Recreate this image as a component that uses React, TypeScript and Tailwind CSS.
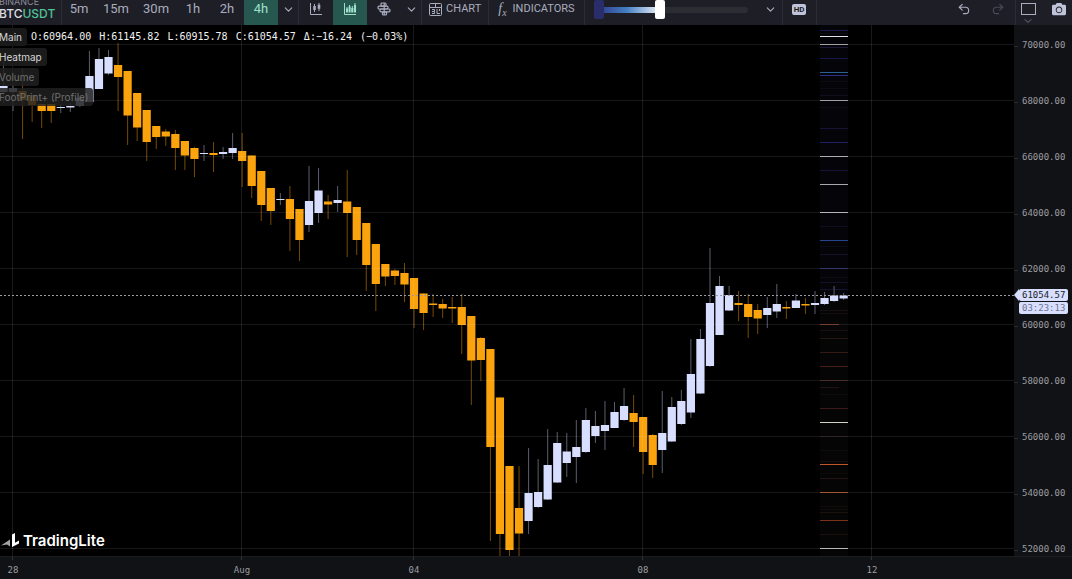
import { useState } from 'react'
import type { ReactNode } from 'react'
import { ChevronDown, Redo2, Undo2 } from 'lucide-react'
import { FaCamera } from 'react-icons/fa'

type Candle = [up: 0 | 1, high: number, top: number, bottom: number, low: number]

const FIRST_X = 3
const STEP = 9.547
const HEADER = 25

// up, high, body top, body bottom, low
const candles: Candle[] = [
  [1, 62, 86, 92, 103], [1, 84, 88, 92, 111], [0, 68, 91, 100, 139], [0, 95, 95, 105, 122],
  [0, 104, 104, 111, 128], [0, 104, 104, 111, 123], [1, 104, 107, 108, 113], [1, 103, 106, 107.5, 112],
  [1, 96, 98, 106, 107], [1, 51, 76, 102, 102], [1, 48, 59, 89, 89], [1, 50, 57, 73.5, 75],
  [0, 43, 65, 77, 111], [0, 71, 71, 115.5, 145], [0, 93, 93, 127.5, 141], [0, 110, 110, 142, 161],
  [0, 126, 126, 137, 149], [0, 129, 131.5, 136.5, 146], [0, 130, 134, 148, 170], [0, 141, 141, 155.5, 170],
  [0, 147, 148, 159, 177], [1, 145, 153, 154, 161], [0, 142, 153, 155, 172], [1, 147, 152, 154, 159],
  [1, 133, 148, 153, 159], [0, 133, 151, 161, 187], [0, 155, 155.5, 186, 198], [0, 171, 171, 205, 221],
  [0, 188, 188, 211, 225], [1, 193, 199, 200, 205], [0, 186, 199, 219, 251], [0, 209, 209, 240, 261],
  [1, 166, 201, 225, 232], [1, 168, 190.5, 213, 223], [0, 195, 201.5, 204.5, 219], [1, 186, 200, 203, 212],
  [0, 170, 201.5, 213, 257], [0, 207, 207, 240, 255], [0, 223, 223, 265, 291], [0, 244, 244, 284, 311],
  [0, 264, 264, 276.5, 286], [0, 269, 270.5, 276, 285], [0, 263, 273, 284.5, 302], [0, 278, 278, 309, 328],
  [0, 293, 293.5, 313, 330], [0, 294, 303.5, 305, 317], [0, 299, 304, 308.5, 318], [0, 297, 307, 308.5, 323],
  [0, 294, 307, 325, 354], [0, 316, 316, 360.5, 405], [0, 337, 338, 360, 381], [0, 349, 349, 447, 541],
  [0, 397, 397.5, 534, 560], [0, 466, 466, 550, 560], [0, 466, 508, 533.5, 560], [1, 448, 493, 521, 534],
  [1, 459, 492, 507, 508], [1, 429, 465, 499.5, 500], [1, 432, 443, 482.5, 483], [1, 433, 451.5, 463, 477],
  [1, 420, 447, 457, 483], [1, 408, 420, 452, 453], [1, 411, 426, 436, 443], [1, 401, 425, 431, 450],
  [1, 402, 412, 428, 428], [1, 388, 406, 420, 421], [0, 395, 413, 422, 447], [0, 417, 417, 452, 474],
  [0, 434, 435, 465, 478], [1, 391, 433, 450, 473], [1, 397, 407, 441.5, 442], [1, 390, 401, 424, 425],
  [1, 339, 374, 412.5, 418], [1, 329, 339, 393.5, 394], [1, 248, 303, 366, 367], [1, 276, 286, 335, 335],
  [1, 286, 295, 310.5, 311], [0, 291, 303, 305, 321], [0, 294, 304, 317, 338], [0, 304, 310, 318.5, 334],
  [1, 297, 308, 315, 328], [1, 284, 304, 311.5, 318], [0, 301, 307, 308.5, 319], [1, 294, 300.5, 308, 308],
  [0, 298, 304, 305.5, 314], [1, 291, 303, 305, 314], [1, 292, 298, 304, 305], [1, 286, 295.5, 301, 302],
  [1, 293, 295.5, 298.5, 300],
]

const heat: [y: number, color: string, width?: number][] = [
  [30, '#1b1850'], [33, '#0d0c16'], [36, '#e4e4e6'], [44, '#9a9a9f'], [47, '#1a1838'], [58, '#17164a'],
  [72, '#28608f'], [75, '#2b3183'], [81, '#0b0b10'], [88, '#0b0b10'], [95, '#100f1e'], [100, '#97979a'],
  [107, '#0b0b10'], [128, '#151336'], [142, '#1d2060'], [156, '#a7a7a9'], [170, '#161338'], [184, '#a9a9ab'],
  [212, '#adadaf'], [226, '#0f0e1e'], [240, '#25458f'], [246, '#0d0c16'], [254, '#14122a'], [268, '#23255f'],
  [277, '#0d0c16'], [282, '#121126'], [289, '#14122c'], [310, '#160e10'], [313, '#130d0d'], [324, '#6b2c1a', 19],
  [330, '#180f0e'], [338, '#251713'], [352, '#331b14'], [366, '#471f17'], [380, '#371a15'], [387, '#211311', 19],
  [394, '#0f0b0b'], [408, '#3f1819'], [422, '#cfd2c6'], [436, '#1a1112'], [450, '#0d0b0b'], [461, '#170e0f'],
  [464, '#bf5829'], [473, '#0f0b0b'], [478, '#241314'], [492, '#9b4322'], [506, '#0f0c0b'], [509, '#120d0b'],
  [512, '#1b120d'], [520, '#7c321a'], [534, '#19100d'], [548, '#b4b4b4'],
]

const prices = [70000, 68000, 66000, 64000, 62000, 60000, 58000, 56000, 54000, 52000]
const days = [
  { x: 13, label: '28' },
  { x: 242, label: 'Aug' },
  { x: 414, label: '04' },
  { x: 643, label: '08' },
  { x: 872, label: '12' },
]
const frames = ['5m', '15m', '30m', '1h', '2h', '4h']
const quote = ['O:60964.00', 'H:61145.82', 'L:60915.78', 'C:61054.57', 'Δ:−16.24', '(−0.03%)']
const layers = [
  { name: 'Heatmap', on: true },
  { name: 'Volume', on: false },
  { name: 'FootPrint+ (Profile)', on: false },
]

const mono = "font-['DejaVu_Sans_Mono',monospace]"
const thumb =
  'pointer-events-none absolute inset-0 h-full w-full appearance-none bg-transparent [&::-webkit-slider-thumb]:pointer-events-auto [&::-webkit-slider-thumb]:h-[19px] [&::-webkit-slider-thumb]:w-[10px] [&::-webkit-slider-thumb]:appearance-none [&::-webkit-slider-thumb]:rounded-[2px]'

function CandlesIcon() {
  return (
    <svg width="14" height="14" viewBox="0 0 14 14" fill="none" stroke="currentColor">
      <path d="M1.5 1v11.5H13" />
      <path d="M5.5 2v8M10 1v8" />
      <path d="M5.5 4v4M10 2.8v4" strokeWidth="2.6" />
    </svg>
  )
}

function FilledCandlesIcon() {
  return (
    <svg width="14" height="14" viewBox="0 0 14 14" fill="none" stroke="currentColor">
      <path d="M1.5 1v11.5H13" />
      <path d="M4 5v5M6.5 3v6M9.3 4v6M12 1v8" />
      <path d="M4 6.5v4M6.6 4.5v6M9.3 6v4.5M12 3v7.5" strokeWidth="2.1" />
    </svg>
  )
}

function FootprintIcon() {
  return (
    <svg width="14" height="14" viewBox="0 0 14 14" fill="none" stroke="currentColor" strokeWidth="1.2">
      <rect x="4" y="1" width="5" height="3.2" rx="1" />
      <rect x="1" y="4.2" width="10" height="2.8" rx="1" />
      <rect x="3" y="7" width="10" height="2.8" rx="1" />
      <rect x="5.5" y="9.8" width="4" height="3.2" rx="1" />
      <path d="M7.2 1v12" />
    </svg>
  )
}

function ChartIcon() {
  return (
    <svg width="13" height="13" viewBox="0 0 13 13" fill="none" stroke="currentColor">
      <rect x="0.5" y="0.5" width="12" height="12" rx="1" />
      <path d="M1 4.5h11M6.5 1v3.5M3 6.5h2.5v2H3M5.5 8.5v2H3M8 6v4.5h3M10.5 6v2" />
    </svg>
  )
}

function Logo() {
  return (
    <svg width="20" height="16" viewBox="0 0 20 16">
      <path d="M1 12.5 10 6.5v7l-3-2Z" fill="#a5a5a5" />
      <path d="M12 1.5 15 0v9.8l4-2.4v3L12 14Z" fill="#fff" />
    </svg>
  )
}

function Tool({ label, active, children }: { label: string; active?: boolean; children: ReactNode }) {
  return (
    <button
      aria-label={label}
      className={`flex w-[34px] items-center justify-center ${active ? 'bg-[#26584f] text-[#9fe0cb]' : 'hover:text-white'}`}
    >
      {children}
    </button>
  )
}

function More({ label }: { label: string }) {
  return (
    <button aria-label={label} className="flex w-5 items-center justify-center">
      <ChevronDown size={13} strokeWidth={2} />
    </button>
  )
}

function Toolbar() {
  const [frame, setFrame] = useState('4h')
  const [low, setLow] = useState(0)
  const [high, setHigh] = useState(43)

  return (
    <header className="-mt-[7px] flex h-8 shrink-0 bg-[#1e1e27] font-['Roboto',sans-serif] text-[#a9adbd]">
      <div className="flex w-[62px] shrink-0 flex-col justify-center border-r border-[#2c2c37] font-['Inter',sans-serif]">
        <span className="-ml-px text-[9px] leading-[10px] text-[#8b8d99]">BINANCE</span>
        <span className="-ml-px text-[12px] leading-[14px] font-medium text-[#dcdde3]">
          BTC<span className="text-[#4fc397]">USDT</span>
        </span>
      </div>

      {/* Timeframes */}
      <div className="flex border-r border-[#2c2c37]">
        {frames.map((f) => (
          <button
            key={f}
            onClick={() => setFrame(f)}
            className={`min-w-[34px] px-[7px] text-[13px] ${f === frame ? 'bg-[#26584f] text-[#9fe0cb]' : 'hover:text-white'}`}
          >
            {f}
          </button>
        ))}
        <More label="More timeframes" />
      </div>

      {/* Chart type */}
      <div className="flex border-r border-[#2c2c37]">
        <Tool label="Candles"><CandlesIcon /></Tool>
        <Tool label="Filled candles" active><FilledCandlesIcon /></Tool>
        <Tool label="Footprint"><FootprintIcon /></Tool>
        <More label="More chart types" />
      </div>

      <button className="flex items-center gap-1 border-r border-[#2c2c37] px-[7px] text-[11px] hover:text-white">
        <ChartIcon />
        CHART
      </button>
      <button className="flex items-center gap-[6px] border-r border-[#2c2c37] px-[9px] text-[11px] hover:text-white">
        <span className="font-['Liberation_Serif',serif] text-[14px] leading-none italic">
          f<sub className="text-[10px]">x</sub>
        </span>
        INDICATORS
      </button>

      {/* Heatmap range */}
      <div className="flex items-center border-r border-[#2c2c37] pl-[9px]">
        <div className="relative h-[19px] w-[154px]">
          <div className="absolute inset-x-0 top-[7px] h-[6px] rounded-full bg-[#2c2d32]" />
          <div
            className="absolute top-[7px] h-[6px] bg-linear-to-r from-[#2b3283] via-[#4580c4] to-[#f1f4f8]"
            style={{ left: `${low}%`, width: `${high - low}%` }}
          />
          <input
            type="range"
            aria-label="Heatmap minimum"
            value={low}
            onChange={(e) => setLow(Number(e.target.value))}
            className={`${thumb} [&::-webkit-slider-thumb]:bg-[#292d69]`}
          />
          <input
            type="range"
            aria-label="Heatmap maximum"
            value={high}
            onChange={(e) => setHigh(Number(e.target.value))}
            className={`${thumb} [&::-webkit-slider-thumb]:bg-white`}
          />
        </div>
        <button aria-label="Heatmap options" className="flex w-[34px] items-center justify-center pl-3">
          <ChevronDown size={13} strokeWidth={2} />
        </button>
      </div>

      <button aria-label="HD" className="flex w-[34px] items-center justify-center border-r border-[#2c2c37]">
        <span className="rounded-[2px] bg-[#c0c4da] px-[2px] text-[8px] leading-[11px] font-bold text-[#1e1e27]">HD</span>
      </button>

      <div className="ml-auto flex">
        <Tool label="Undo"><Undo2 size={14} /></Tool>
        <span className="flex text-[#4a4b57]">
          <Tool label="Redo"><Redo2 size={14} /></Tool>
        </span>
      </div>
      <div className="flex w-[57px] shrink-0 items-center justify-between border-l border-[#2c2c37] pr-[6px] pl-[5px]">
        <button aria-label="Layout" className="relative h-3 w-[15px] border border-[#a9adbd]">
          <ChevronDown size={12} className="absolute top-[11px] left-0 text-[#6d6f7c]" />
        </button>
        <button aria-label="Snapshot" className="text-[#c0c4da]">
          <FaCamera size={14} />
        </button>
      </div>
    </header>
  )
}

function Plot() {
  return (
    <svg className="absolute inset-0 h-full w-full" shapeRendering="crispEdges">
      <g transform={`translate(0 ${-HEADER})`}>
        <rect x="820" y="25" width="28" height="274" fill="#050509" />
        <rect x="820" y="299" width="28" height="262" fill="#060505" />
        {heat.map(([y, color, width]) => (
          <rect key={y} x="820" y={y} width={width ?? 28} height="1" fill={color} />
        ))}

        <g shapeRendering="auto">
          {candles.map(([up, hi, top, bottom, lo], i) => {
            const x = FIRST_X + i * STEP
            return (
              <g key={i}>
                <rect x={x} y={hi} width="1" height={lo - hi} fill={up ? '#5b5d6e' : '#754a06'} />
                <rect x={x - 3.6} y={top} width="8.2" height={bottom - top} fill={up ? '#d8deff' : '#faa30c'} />
              </g>
            )
          })}
        </g>

        {prices.map((p, i) => (
          <rect key={p} x="0" y={44 + i * 56} width="100%" height="1" fill="#fff" fillOpacity="0.09" />
        ))}
        {days.map((d) => (
          <rect key={d.x} x={d.x - 1} y="25" width="1" height="100%" fill="#fff" fillOpacity="0.1" />
        ))}
        <line x1="0" x2="100%" y1="295.5" y2="295.5" stroke="#9a9ba3" strokeDasharray="2 2" />
      </g>
    </svg>
  )
}

function PriceAxis() {
  return (
    <aside className={`relative w-[58px] shrink-0 overflow-hidden bg-[#111216] text-[9px] text-[#9c9da1] ${mono}`}>
      <ul className="-mt-[7px]">
        {prices.map((p) => (
          <li key={p} className="flex h-14 items-center gap-1">
            <span className="h-px w-1 bg-[#2a2b2f]" />
            {p.toFixed(2)}
          </li>
        ))}
      </ul>

      {/* Last price */}
      <div className="absolute top-[264px] left-0 flex">
        <svg width="5" height="12" viewBox="0 0 5 12">
          <path d="M5 0v12L0 6Z" fill="#d8deff" />
        </svg>
        <div className="flex flex-col gap-px text-center leading-3">
          <span className="rounded-[2px] bg-[#d8deff] px-[3px] text-[#1c1d24]">61054.57</span>
          <span className="rounded-[2px] bg-[#d8deff] px-[3px] text-[#70748c]">03:23:13</span>
        </div>
      </div>
    </aside>
  )
}

function Legend() {
  return (
    <div className="absolute top-[3px] left-0 flex flex-col items-start gap-[2px] font-['Inter',sans-serif] text-[10px] leading-[18px]">
      <div className="flex items-center gap-1">
        <button className="-ml-1 rounded-[3px] bg-[#191919] pr-[5px] pl-[3px] text-[#d6d6d6]">Main</button>
        <div className={`flex gap-2 text-[#f2f2f2] ${mono}`}>
          {quote.map((q) => (
            <span key={q}>{q}</span>
          ))}
        </div>
      </div>
      {layers.map((l) => (
        <button
          key={l.name}
          className={`-ml-1 rounded-[3px] bg-[#202020]/85 pr-[5px] pl-[3px] ${l.on ? 'text-[#d6d6d6]' : 'text-[#707070]'}`}
        >
          {l.name}
        </button>
      ))}
    </div>
  )
}

export default function App() {
  return (
    <div className="flex h-screen flex-col overflow-hidden bg-black">
      <Toolbar />
      <main className="flex min-h-0 flex-1">
        <section className="relative min-w-0 flex-1 overflow-hidden">
          <Plot />
          <Legend />
          <a href="#" className="absolute bottom-1 left-0 flex items-center gap-[3px] font-['Inter',sans-serif] text-[15px] font-semibold text-white">
            <Logo />
            TradingLite
          </a>
        </section>
        <PriceAxis />
      </main>
      <footer className="h-[23px] shrink-0 border-t border-[#1b1c20] bg-[#111216]">
        <svg className={`h-full w-full text-[9px] ${mono}`}>
          {days.map((d) => (
            <g key={d.x}>
              <rect x={d.x - 1} y="0" width="1" height="3" fill="#333438" />
              <text x={d.x} y="16" textAnchor="middle" fill="#9c9da1">{d.label}</text>
            </g>
          ))}
        </svg>
      </footer>
    </div>
  )
}
